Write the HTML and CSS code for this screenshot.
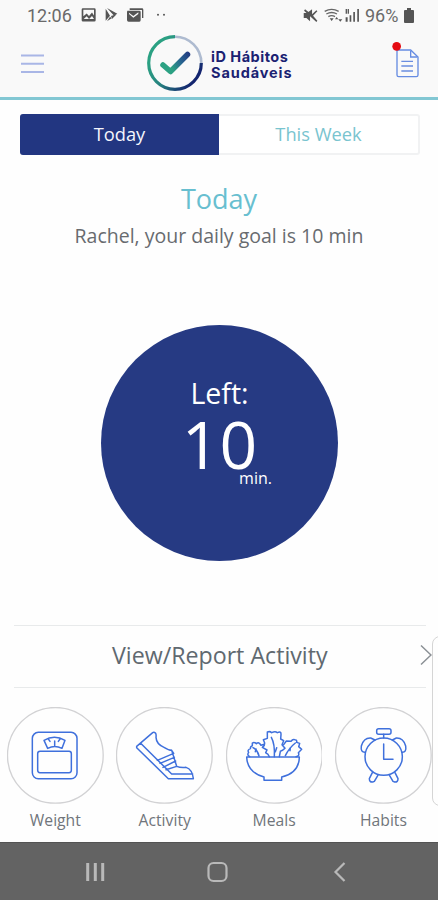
FILE: index.html
```html
<!DOCTYPE html>
<html lang="en">
<head>
<meta charset="utf-8">
<title>iD Hábitos Saudáveis</title>
<link rel="stylesheet" href="styles.css">
</head>
<body>
<div class="phone">
  <div class="status">
    <span class="clock">12:06</span>
    <svg class="status-left" viewBox="0 0 270 54" fill="#555">
      <path fill-rule="evenodd" d="M5 12h34q4 0 4 4v34q0 4-4 4H5q-4 0-4-4V16q0-4 4-4zM6 17v21l10-9 7 8 9-11 6 9V17zM7 46h31l-6-9-9 9-7-8z" transform="translate(1 -5) scale(1 .95)"/>
      <path d="M74 8v36l13-15zM78 6l31 17-11 5zM90 30l17-5-14 14zM78 46l9-14 5 5z"/>
      <path d="M146 7h37q4 0 4 4v25h-4V12h-37z"/>
      <path fill-rule="evenodd" d="M139 14h36q4 0 4 4v24q0 5-4 5h-32q-5 0-5-5V18zM144 20v4l13 11 15-11v-5l-15 11z"/>
      <circle cx="231" cy="26" r="3"/><circle cx="249" cy="26" r="3"/>
    </svg>
    <svg class="status-right" viewBox="0 0 174 46" fill="#555">
      <path d="M2 15h10L27 4v15L40 7l3 3-13 13 13 15-3 4L3 8l3-4 15 12v24L10 30H2z"/>
      <g fill="none" stroke="#666" stroke-width="4"><path d="M65 10q21-12 42 0M70 18q16-9 32 0M76 26q10-6 20 0"/></g>
      <path d="M80 31h12l-6 8zM96 34h10l-5-7zM106 34h12l-6 7z"/>
      <path d="M128 3h4v14h-4zM134 3h4v14h-4zM128 28h6v13h-6zM140 22h5v19h-5zM151 12h5v29h-5zM163 3h5v38h-5z"/>
    </svg>
    <span class="percent">96%</span>
    <svg class="battery" viewBox="0 0 10 15" fill="#555"><path d="M3 0h4v2h2q1 0 1 1v11q0 1-1 1H1q-1 0-1-1V3q0-1 1-1h2z"/></svg>
  </div>
  <header class="header">
    <svg class="menu" viewBox="0 0 23 20" stroke="#a9b6e6" stroke-width="2"><path d="M0 1.500h23M0 9.700h23M0 18h23"/></svg>
    <div class="brand">
      <svg class="logo" viewBox="0 0 56 56" fill="none">
        <defs>
          <linearGradient id="ring" gradientUnits="userSpaceOnUse" x1="8" y1="18" x2="48" y2="44"><stop offset="0" stop-color="#2ba183"/><stop offset=".45" stop-color="#26817f"/><stop offset="1" stop-color="#14246f"/></linearGradient>
          <linearGradient id="tick" gradientUnits="userSpaceOnUse" x1="14" y1="34" x2="42" y2="18"><stop offset=".3" stop-color="#2ca183"/><stop offset=".65" stop-color="#286490"/><stop offset="1" stop-color="#223b81"/></linearGradient>
        </defs>
        <path d="M28 1.700A26.300 26.300 0 0 1 54.300 28" stroke="#aebbd0" stroke-width="2.600"/>
        <path d="M54.300 28A26.300 26.300 0 1 1 28 1.700" stroke="url(#ring)" stroke-width="3.200"/>
        <path d="M16 30L23.500 36.500L40.500 19.500" stroke="url(#tick)" stroke-width="5.500" stroke-linecap="round" stroke-linejoin="round"/>
      </svg>
      <div class="brand-name"><div class="brand-first">iD Hábitos</div><div class="brand-second">Saudáveis</div></div>
    </div>
    <svg class="document" viewBox="0 0 81 108" fill="none">
      <path d="M18 24H56L78 45V99Q78 104 73 104H20Q15 104 15 99V24Z" stroke="#668ce2" stroke-width="4"/>
      <path d="M56 26V45H76" stroke="#668ce2" stroke-width="4"/>
      <path d="M28 58H63M28 72H63M28 87H63" stroke="#6a8de0" stroke-width="4"/>
      <circle cx="14" cy="13" r="13" fill="#e50b12"/>
    </svg>
  </header>
  <main>
    <div class="tabs"><div class="tab active">Today</div><div class="tab">This Week</div></div>
    <h1>Today</h1>
    <p class="goal">Rachel, your daily goal is 10 min</p>
    <div class="dial">
      <div class="left">Left:</div>
      <div class="value">10</div>
      <div class="unit">min.</div>
    </div>
    <div class="report">
      <span class="report-text">View/Report Activity</span>
      <svg class="chevron" viewBox="0 0 12 22" fill="none" stroke="#8b9095" stroke-width="1.500"><path d="M1 1.500L11 11L1 20.500"/></svg>
    </div>
    <nav class="shortcuts">
      <div class="item">
        <svg viewBox="22 21 290 290"><circle class="ring" cx="167" cy="166" r="143.500"/><g class="lines">
          <rect x="98" y="97" width="134" height="139" rx="18"/><rect x="114" y="154" width="101" height="64" rx="7"/>
          <path d="M133 121Q164 103 196 121L187 145Q165 134 144 145ZM165 123V137M146 117L151 124M181 117L176 124"/>
        </g></svg><span>Weight</span>
      </div>
      <div class="item">
        <svg viewBox="349 21 290 290"><circle class="ring" cx="494" cy="166" r="143.500"/><g class="lines">
          <path d="M411 139L459 98Q463 95 468 100Q470 104 469 112Q470 132 493 142Q507 151 516 151L531 199Q543 204 559 202Q578 208 581 236H506L411 143ZM423 130L516 222H579M516 151L522 160L473 181M524 172L481 190M528 183L490 202M531 199L499 209"/>
        </g></svg><span>Activity</span>
      </div>
      <div class="item">
        <svg viewBox="21 21 290 290"><circle class="ring" cx="166" cy="166" r="143.500"/><g class="lines">
          <path d="M83 171H241Q240 219 188 231V241H135V231Q85 217 83 171Z"/>
          <path d="M92 170Q83 165 89 157Q84 150 94 146Q94 138 100 137L100 129Q106 125 112 131Q120 124 126 136L136 133M102 143Q116 150 120 168"/>
          <path d="M151 170Q148 161 140 158L144 150L130 142Q138 136 137 129L133 119L145 115V96Q153 93 158 98Q169 92 175 98Q187 93 186 103L185 117L194 122L189 134L198 145Q191 152 184 154L181 170M157 112Q168 132 166 170"/>
          <path d="M194 134L202 123L216 124Q221 116 227 119Q235 119 233 127L242 130L239 140L248 148L238 158Q243 168 231 170M229 129Q210 144 199 167M111 147L109 155M214 143L213 152M173 143L169 155"/>
        </g></svg><span>Meals</span>
      </div>
      <div class="item">
        <svg viewBox="348 21 290 290"><circle class="ring" cx="493" cy="166" r="143.500"/><g class="lines">
          <circle cx="494" cy="170" r="56"/><rect x="473" y="86" width="43" height="17" rx="6"/>
          <path d="M494 103V114M494 132V178H522M439 157Q424 158 427 138Q434 113 455 114L468 120M549 157Q563 158 560 138Q553 113 532 114L520 120"/>
          <path d="M460 218L451 236Q451 247 461 246L466 244L477 225M528 218L537 236Q537 247 527 246L522 244L511 225"/>
        </g></svg><span>Habits</span>
      </div>
    </nav>
    <div class="edge-panel"></div>
  </main>
  <footer class="system">
    <svg viewBox="0 0 438 58" fill="none" stroke="#b9b9b9" stroke-width="3">
      <path d="M87.700 21V39M95.300 21V39M102.700 21V39"/><rect x="208.500" y="21" width="18" height="18" rx="5" stroke-width="2.200"/><path d="M344.500 21L335.500 30L344.500 39" stroke-width="2.200"/>
    </svg>
  </footer>
</div>
</body>
</html>
```
FILE: styles.css
```css
* { box-sizing: border-box; }
body { margin: 0; background: #fefefe; font-family: "Open Sans", sans-serif; }
.phone { position: relative; width: 438px; height: 900px; display: flex; flex-direction: column; overflow: hidden; }
.status { height: 30px; flex: none; display: flex; align-items: flex-start; background: #f9f9f9; padding: 5px 24px 0 27px; color: #6a6a6a; font: 18px/22px Roboto, sans-serif; }
.clock { width: 54px; }
.status-left { width: 90px; height: 18px; margin-top: 1px; }
.status-right { width: 58px; height: 15.300px; margin: 3px 4px 0 auto; }
.percent { width: 39px; padding-left: 0; }
.battery { width: 10px; height: 15px; margin-top: 3px; }
.header { height: 70px; flex: none; display: flex; align-items: flex-start; background: #f9f9f9; border-bottom: 3px solid #82c7d3; padding: 0 19px 0 21px; }
.menu { width: 23px; height: 20px; margin-top: 24px; }
.brand { display: flex; margin: 5px auto 0 103px; gap: 8px; }
.logo { width: 56px; height: 56px; }
.brand-name { color: #1b2272; font: 700 14.500px/16px Inter, sans-serif; padding-top: 14px; white-space: nowrap; }
.brand-first { letter-spacing: .5px; }
.brand-second { letter-spacing: .9px; }
.document { width: 27px; height: 36px; margin-top: 12px; }
main { flex: 1; display: flex; flex-direction: column; align-items: center; }
.tabs { width: 400px; height: 41px; margin: 14px 0 0 2px; display: flex; border: 2px solid #f1f2f3; border-left: 0; border-radius: 3px; background: #fff; }
.tab { flex: 1; font-size: 18.300px; line-height: 36px; text-align: center; color: #79c4cf; }
.tab.active { margin: -2px 0; flex: none; width: 199px; line-height: 40px; background: #223681; color: #f4f5fc; border-radius: 3px 0 0 3px; }
h1 { margin: 25px 0 0; font-size: 27px; line-height: 38px; font-weight: 400; color: #68bfd0; }
.goal { margin: 4px 0 0; font-size: 19.500px; line-height: 28px; color: #686b6f; white-space: nowrap; }
.dial { width: 237px; height: 236px; margin: 75px 0 0 1px; border-radius: 50%; background: #263a83; color: #fff; text-align: center; padding-top: 49px; }
.left { font-size: 28.500px; line-height: 38px; }
.value { font-size: 66px; line-height: 66px; margin-top: -2px; }
.unit { font-size: 16px; line-height: 20px; padding-left: 72px; margin-top: -8px; }
.report { width: 438px; height: 63px; flex: none; margin-top: 64px; padding: 0 6px 4px 112px; background: linear-gradient(#e8eaeb, #e8eaeb) 14px 0 / 412px 1px no-repeat, linear-gradient(#e8eaeb, #e8eaeb) 14px 100% / 412px 1px no-repeat; display: flex; align-items: center; justify-content: space-between; }
.report-text { font-size: 23.200px; color: #606970; white-space: nowrap; }
.chevron { width: 12px; height: 22px; }
.shortcuts { width: 438px; display: flex; gap: 12.700px; margin-top: 19px; padding-left: 7px; }
.item { width: 96.700px; flex: none; display: flex; flex-direction: column; align-items: center; color: #70757b; font-size: 15.700px; line-height: 22px; }
.item svg { width: 96.700px; height: 96.700px; margin-bottom: 5px; }
.ring { fill: none; stroke: #d2d2d4; stroke-width: 4; }
.lines { fill: none; stroke: #3f70dc; stroke-width: 4.500; stroke-linejoin: round; stroke-linecap: round; }
.edge-panel { position: absolute; left: 432px; top: 636px; width: 18px; height: 170px; border: 1.500px solid #d5d5d5; border-radius: 8px; background: #fefefe; }
.system { height: 58px; flex: none; background: #636363; border-top: 1px solid #535353; }
.system svg { display: block; width: 438px; height: 58px; margin-top: -1px; }
```
